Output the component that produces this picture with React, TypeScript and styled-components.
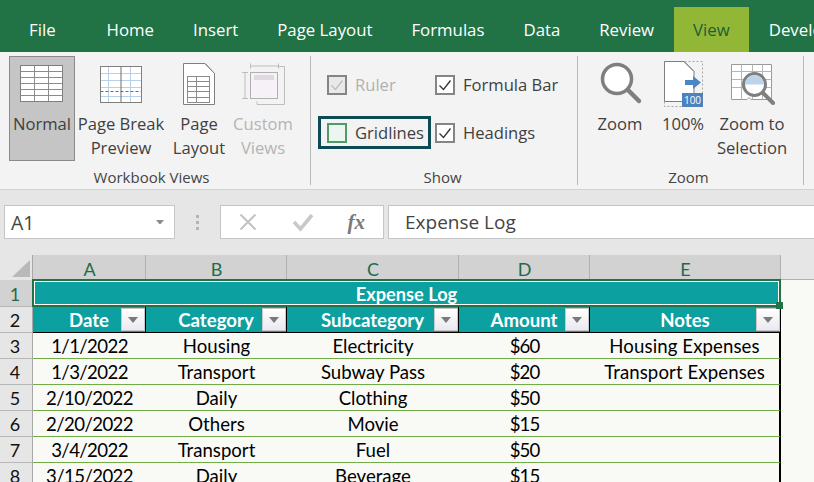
import React from 'react';
import styled, { createGlobalStyle } from 'styled-components';

const GlobalStyle = createGlobalStyle`
  html, body {
    margin: 0;
    padding: 0;
    background: #f9faf6;
  }
  body {
    width: 814px;
    height: 482px;
    overflow: hidden;
  }
`;

const tabs = ['File', 'Home', 'Insert', 'Page Layout', 'Formulas', 'Data', 'Review', 'View', 'Developer'];
const columns = ['A', 'B', 'C', 'D', 'E'];
const headers = ['Date', 'Category', 'Subcategory', 'Amount', 'Notes'];
// digits run narrower in the reference font, so date and amount columns get tighter tracking
const tracking = [-0.6, 0, 0, -1, 0.1];
const rows = [
  ['1/1/2022', 'Housing', 'Electricity', '$60', 'Housing Expenses'],
  ['1/3/2022', 'Transport', 'Subway Pass', '$20', 'Transport Expenses'],
  ['2/10/2022', 'Daily', 'Clothing', '$50', ''],
  ['2/20/2022', 'Others', 'Movie', '$15', ''],
  ['3/4/2022', 'Transport', 'Fuel', '$50', ''],
  ['3/15/2022', 'Daily', 'Beverage', '$15', ''],
];

const gridLines = (xs: number[], ys: number[], x0: number, x1: number, y0: number, y1: number) => (
  <>
    {xs.map((x) => (
      <line key={`x${x}`} x1={x} x2={x} y1={y0} y2={y1} />
    ))}
    {ys.map((y) => (
      <line key={`y${y}`} x1={x0} x2={x1} y1={y} y2={y} />
    ))}
  </>
);

const NormalIcon = () => (
  <svg width="48" height="48" viewBox="0 0 48 48">
    <rect x="2.5" y="4.5" width="42" height="36" fill="#fff" stroke="#7f7f7f" />
    <g stroke="#8c8c8c">
      {gridLines([16.5, 30.5], [10.5, 16.5, 22.5, 28.5, 34.5], 2.5, 44.5, 4.5, 40.5)}
    </g>
  </svg>
);

const PageBreakIcon = () => (
  <svg width="48" height="48" viewBox="0 0 48 48">
    <rect x="3.5" y="5.5" width="41" height="36" fill="#fff" />
    <g stroke="#b9d0ea">
      {gridLines([11.5, 33.5], [12.5, 19.5, 26.5, 35.5], 3.5, 44.5, 5.5, 41.5)}
    </g>
    <line x1="24" x2="24" y1="5.5" y2="41.5" stroke="#6e6e6e" />
    <line x1="3.5" x2="44.5" y1="30.5" y2="30.5" stroke="#6e6e6e" strokeDasharray="3 2" />
    <rect x="3.5" y="5.5" width="41" height="36" fill="none" stroke="#7f7f7f" />
  </svg>
);

const PageLayoutIcon = () => (
  <svg width="48" height="48" viewBox="0 0 48 48">
    <path d="M8.5 2.5H30l9.5 10v31h-31z" fill="#fff" stroke="#7f7f7f" />
    <path d="M30 2.5l9.5 10" fill="none" stroke="#7f7f7f" />
    <rect x="12.5" y="15.5" width="22" height="26" fill="#fff" stroke="#8c8c8c" />
    <g stroke="#8c8c8c">
      {gridLines([21.5], [20.5, 25.5, 30.5, 36.5], 12.5, 34.5, 15.5, 41.5)}
    </g>
  </svg>
);

const CustomViewsIcon = () => (
  <svg width="48" height="48" viewBox="0 0 48 48">
    <g fill="none" stroke="#bdbdbd">
      <rect x="11.5" y="11.5" width="27" height="26" fill="#f5f1f6" stroke="#b0b0b0" />
      <path d="M11.5 2.5v5M39.5 2.5v5M11.5 5h28M3 11.5h6M3 37.5h6M6 11.5v26" />
      <path d="M40 5.5h5.5v38H18v-3" />
    </g>
    <rect x="15" y="14" width="20" height="5" fill="#e0dae0" />
  </svg>
);

const ZoomIcon = () => (
  <svg width="48" height="48" viewBox="0 0 48 48">
    <circle cx="21" cy="18" r="14.5" fill="#fff" stroke="#7f7f7f" strokeWidth="3.5" />
    <line x1="32" y1="29" x2="43" y2="40" stroke="#7f7f7f" strokeWidth="4.5" strokeLinecap="round" />
  </svg>
);

const HundredIcon = () => (
  <svg width="48" height="48" viewBox="0 0 48 48">
    <rect x="5.5" y="0.5" width="38" height="45" fill="none" stroke="#a6a6a6" strokeDasharray="2 2" />
    <path d="M5.5 0.5H25l10 10v30H5.5z" fill="#fff" stroke="#7f7f7f" />
    <path d="M25 0.5l10 10" fill="none" stroke="#7f7f7f" />
    <path d="M26 19h8v-4l8 6.5-8 6.5v-4h-8z" fill="#4a86c5" />
    <rect x="23" y="32" width="21" height="14" fill="#4f81bd" />
    <text x="33.5" y="43" fontFamily="'Open Sans', sans-serif" fontSize="10" fill="#fff" textAnchor="middle">
      100
    </text>
  </svg>
);

const ZoomSelectionIcon = () => (
  <svg width="50" height="48" viewBox="0 0 50 48">
    <path d="M4.5 3.5h40v35H24l-2-2-2 2H4.5z" fill="#fff" stroke="#9a9a9a" />
    <g stroke="#b5b5b5">{gridLines([14.5, 25.5, 35.5], [10.5, 18.5, 26.5], 4.5, 44.5, 3.5, 38.5)}</g>
    <circle cx="27.5" cy="23.5" r="11" fill="#fff" stroke="#7f7f7f" strokeWidth="3" />
    <path d="M18 23.5a9.5 9.5 0 0 1 19 0z" fill="#bcd3ea" />
    <line x1="36" y1="32" x2="46" y2="42" stroke="#7f7f7f" strokeWidth="4" strokeLinecap="round" />
  </svg>
);

const Check = ({ color }: { color: string }) => (
  <svg width="14" height="14" viewBox="0 0 14 14">
    <path d="M1.5 7.5l4 4 7-9" fill="none" stroke={color} strokeWidth="1.3" />
  </svg>
);

const Caret = ({ width = 10, color = '#7a7a7a' }: { width?: number; color?: string }) => (
  <svg width={width} height={width * 0.6} viewBox="0 0 10 6">
    <path d="M0 0h10L5 6z" fill={color} />
  </svg>
);

export default function App() {
  return (
    <Page>
      <GlobalStyle />
      <TabBar>
        {tabs.map((tab) => (
          <Tab key={tab} $active={tab === 'View'} $first={tab === 'File'}>
            {tab}
          </Tab>
        ))}
      </TabBar>

      <Ribbon>
        <Group $width={311} $pad={9}>
          <GroupBody>
            <BigButton $width={66} $selected>
              <IconSlot><NormalIcon /></IconSlot>
              Normal
            </BigButton>
            <BigButton $width={92}>
              <IconSlot><PageBreakIcon /></IconSlot>
              Page Break<br />Preview
            </BigButton>
            <BigButton $width={64}>
              <IconSlot><PageLayoutIcon /></IconSlot>
              Page<br />Layout
            </BigButton>
            <BigButton $width={64} $disabled>
              <IconSlot><CustomViewsIcon /></IconSlot>
              Custom<br />Views
            </BigButton>
          </GroupBody>
          <GroupLabel $offset={-16}>Workbook Views</GroupLabel>
        </Group>

        <Group $width={267} $pad={7}>
          <ShowGrid>
            <CheckRow $disabled>
              <CheckBox $disabled><Check color="#bdbdbd" /></CheckBox>
              Ruler
            </CheckRow>
            <CheckRow>
              <CheckBox><Check color="#333" /></CheckBox>
              Formula Bar
            </CheckRow>
            <CheckRow $focused>
              <CheckBox $focused />
              Gridlines
            </CheckRow>
            <CheckRow>
              <CheckBox><Check color="#333" /></CheckBox>
              Headings
            </CheckRow>
          </ShowGrid>
          <GroupLabel $offset={-10}>Show</GroupLabel>
        </Group>

        <Group $width={226} $pad={10}>
          <GroupBody>
            <BigButton $width={64}>
              <IconSlot><ZoomIcon /></IconSlot>
              Zoom
            </BigButton>
            <BigButton $width={62}>
              <IconSlot><HundredIcon /></IconSlot>
              100%
            </BigButton>
            <BigButton $width={76}>
              <IconSlot><ZoomSelectionIcon /></IconSlot>
              Zoom to<br />Selection
            </BigButton>
          </GroupBody>
          <GroupLabel $offset={-14}>Zoom</GroupLabel>
        </Group>
      </Ribbon>

      <FormulaBar>
        <NameBox>
          A1
          <Caret width={8} color="#8c8c8c" />
        </NameBox>
        <Grip>
          <i /><i /><i />
        </Grip>
        <FormulaButtons>
          <svg width="20" height="20" viewBox="0 0 20 20">
            <path d="M2.5 2.5l15 15M17.5 2.5l-15 15" stroke="#c4c4c4" strokeWidth="2.2" />
          </svg>
          <svg width="22" height="20" viewBox="0 0 22 20">
            <path d="M2 10l6.5 7L20 3" fill="none" stroke="#c9c9c9" strokeWidth="3.6" />
          </svg>
          <FxLabel>fx</FxLabel>
        </FormulaButtons>
        <FormulaInput>Expense Log</FormulaInput>
      </FormulaBar>

      <Sheet>
        <Corner>
          <svg width="33" height="25" viewBox="0 0 33 25">
            <path d="M30 5v17H12z" fill="#b9b9b9" />
          </svg>
        </Corner>
        {columns.map((col) => (
          <ColumnHead key={col}>{col}</ColumnHead>
        ))}
        <BlankHead />

        <RowHead $selected>1</RowHead>
        <TitleCell>
          Expense Log
          <FillHandle />
        </TitleCell>
        <BlankTop />

        <RowHead>2</RowHead>
        {headers.map((h) => (
          <HeaderCell key={h}>
            {h}
            <FilterButton><Caret /></FilterButton>
          </HeaderCell>
        ))}
        <Blank />

        {rows.map((row, i) => (
          <React.Fragment key={row[0]}>
            <RowHead>{i + 3}</RowHead>
            {row.map((value, j) => (
              <DataCell key={j} $last={j === row.length - 1} $tracking={tracking[j]}>
                {value}
              </DataCell>
            ))}
            <Blank />
          </React.Fragment>
        ))}
      </Sheet>
    </Page>
  );
}

// Styled Components
const Page = styled.div`
  width: 814px;
  height: 482px;
  overflow: hidden;
  display: flex;
  flex-direction: column;
  font-family: 'Open Sans', sans-serif;
`;

const TabBar = styled.div`
  height: 52px;
  flex: none;
  box-sizing: border-box;
  padding-top: 7px;
  display: flex;
  background: #217346;
  overflow: hidden;
`;

const Tab = styled.div<{ $active?: boolean; $first?: boolean }>`
  flex: none;
  height: 45px;
  line-height: 45px;
  padding: ${(p) => (p.$first ? '0 31.5px 0 29px' : '0 19.5px')};
  font-size: 16.8px;
  color: ${(p) => (p.$active ? '#1d5c38' : '#fff')};
  background: ${(p) => (p.$active ? '#92b737' : 'transparent')};
`;

const Ribbon = styled.div`
  height: 138px;
  flex: none;
  box-sizing: border-box;
  padding-top: 4px;
  display: flex;
  align-items: flex-start;
  background: #f3f3f3;
  border-bottom: 1px solid #d2d2d2;
`;

const Group = styled.div<{ $width: number; $pad: number }>`
  width: ${(p) => p.$width}px;
  height: 129px;
  flex: none;
  box-sizing: border-box;
  padding-left: ${(p) => p.$pad}px;
  border-right: 1px solid #b8b8b8;
  display: flex;
  flex-direction: column;
`;

const GroupBody = styled.div`
  display: flex;
`;

const GroupLabel = styled.div<{ $offset: number }>`
  margin-top: auto;
  padding-right: ${(p) => -p.$offset}px;
  height: 16px;
  line-height: 16px;
  text-align: center;
  font-size: 15px;
  color: #444;
`;

const BigButton = styled.div<{ $width: number; $selected?: boolean; $disabled?: boolean }>`
  width: ${(p) => p.$width}px;
  height: 105px;
  flex: none;
  box-sizing: border-box;
  border: 1px solid ${(p) => (p.$selected ? '#8a8a8a' : 'transparent')};
  background: ${(p) => (p.$selected ? '#c5c5c5' : 'transparent')};
  color: ${(p) => (p.$disabled ? '#b4b4b4' : '#3f3f3f')};
  font-size: 16.6px;
  line-height: 24px;
  text-align: center;
  white-space: nowrap;
`;

const IconSlot = styled.div`
  height: 55px;
  padding-top: 4px;
  box-sizing: border-box;
  display: flex;
  justify-content: center;
  align-items: flex-start;
`;

const ShowGrid = styled.div`
  display: grid;
  grid-template-columns: 113px auto;
  row-gap: 15px;
  padding-top: 12px;
`;

const CheckRow = styled.div<{ $focused?: boolean; $disabled?: boolean }>`
  height: 33px;
  box-sizing: border-box;
  border: 3px solid ${(p) => (p.$focused ? '#0d4b54' : 'transparent')};
  padding-left: 1px;
  display: flex;
  align-items: center;
  gap: 8px;
  font-size: 16.6px;
  white-space: nowrap;
  color: ${(p) => (p.$disabled ? '#b1b1b1' : '#3f3f3f')};
  &:nth-child(odd) {
    padding-left: 6px;
  }
`;

const CheckBox = styled.div<{ $focused?: boolean; $disabled?: boolean }>`
  width: 20px;
  height: 20px;
  flex: none;
  box-sizing: border-box;
  border: 2px solid ${(p) => (p.$focused ? '#4f9a6b' : '#858585')};
  background: ${(p) => (p.$focused ? '#eef4f0' : p.$disabled ? '#e9e9e9' : '#fff')};
  display: flex;
  align-items: center;
  justify-content: center;
`;

const FormulaBar = styled.div`
  height: 65px;
  flex: none;
  box-sizing: border-box;
  padding: 15px 0 16px 4px;
  display: flex;
  background: #e6e6e6;
`;

const NameBox = styled.div`
  width: 171px;
  box-sizing: border-box;
  padding: 0 10px 0 6px;
  display: flex;
  align-items: center;
  justify-content: space-between;
  background: #fff;
  border: 1px solid #c6c6c6;
  font-size: 19.5px;
  color: #444;
`;

const Grip = styled.div`
  width: 45px;
  display: flex;
  flex-direction: column;
  align-items: center;
  justify-content: center;
  gap: 3px;
  & > i {
    display: block;
    width: 3px;
    height: 3px;
    background: #b4b4b4;
  }
`;

const FormulaButtons = styled.div`
  width: 164px;
  box-sizing: border-box;
  padding: 0 18px 0 17px;
  display: flex;
  align-items: center;
  justify-content: space-between;
  background: #fff;
  border: 1px solid #c6c6c6;
`;

const FxLabel = styled.span`
  font-family: 'Liberation Serif', serif;
  font-style: italic;
  font-weight: 700;
  font-size: 21px;
  color: #7a7a7a;
`;

const FormulaInput = styled.div`
  flex: 1;
  margin-left: 4px;
  padding-left: 16px;
  display: flex;
  align-items: center;
  background: #fff;
  border-top: 1px solid #c6c6c6;
  border-bottom: 1px solid #c6c6c6;
  border-left: 1px solid #c6c6c6;
  font-size: 19px;
  color: #444;
`;

const Sheet = styled.div`
  display: grid;
  grid-template-columns: 33px 113px 141px 172px 131px 191px 1fr;
  grid-template-rows: 25px 27px 26px;
  grid-auto-rows: 26px;
  font-family: 'Lato', sans-serif;
  font-size: 18.6px;
  color: #000;
  background: #f9faf6;
`;

const Corner = styled.div`
  background: #e6e6e6;
  line-height: 0;
  border-right: 1px solid #a8a8a8;
  box-sizing: border-box;
`;

const ColumnHead = styled.div`
  background: #d2d2d2;
  border-right: 1px solid #b0b0b0;
  box-sizing: border-box;
  display: flex;
  align-items: center;
  justify-content: center;
  padding: 2px 0 0 1px;
  font-size: 18px;
  color: #1e6b46;
`;

const BlankHead = styled.div`
  background: #e6e6e6;
`;

const BlankTop = styled.div`
  border-top: 1px solid #b0b0b0;
  margin-top: -1px;
`;

const Blank = styled.div``;

const RowHead = styled.div<{ $selected?: boolean }>`
  background: ${(p) => (p.$selected ? '#d2d2d2' : '#e6e6e6')};
  color: ${(p) => (p.$selected ? '#1e6b46' : '#111')};
  border-right: 1px solid #a8a8a8;
  border-bottom: 1px solid #b8b8b8;
  box-sizing: border-box;
  display: flex;
  align-items: center;
  justify-content: center;
  padding: 1px 2px 0 0;
  font-size: 18px;
`;

const TitleCell = styled.div`
  grid-column: span 5;
  position: relative;
  margin: -1px 0 0 -1px;
  box-sizing: border-box;
  background: #0da0a0;
  border: 2px solid #217346;
  box-shadow: inset 0 0 0 1px #fff;
  display: flex;
  align-items: center;
  justify-content: center;
  padding-top: 1px;
  font-size: 18.2px;
  color: #fff;
  font-weight: 700;
`;

const FillHandle = styled.span`
  position: absolute;
  right: -4px;
  bottom: -4px;
  width: 7px;
  height: 7px;
  background: #217346;
  z-index: 1;
`;

const HeaderCell = styled.div`
  position: relative;
  box-sizing: border-box;
  background: #0da0a0;
  border-right: 1px solid #000;
  border-bottom: 1px solid #000;
  display: flex;
  align-items: center;
  justify-content: center;
  padding-top: 1px;
  color: #fff;
  font-weight: 700;
`;

const FilterButton = styled.span`
  position: absolute;
  right: 0;
  top: 1px;
  width: 24px;
  height: 23px;
  box-sizing: border-box;
  border: 1px solid #c8c8c8;
  background: linear-gradient(#ffffff, #e9e9f0);
  display: flex;
  align-items: center;
  justify-content: center;
`;

const DataCell = styled.div<{ $last?: boolean; $tracking: number }>`
  box-sizing: border-box;
  background: #f9faf6;
  border-bottom: 1px solid #70ad47;
  border-right: ${(p) => (p.$last ? '2px solid #000' : 'none')};
  display: flex;
  align-items: center;
  justify-content: center;
  padding-top: 1px;
  letter-spacing: ${(p) => p.$tracking}px;
`;
